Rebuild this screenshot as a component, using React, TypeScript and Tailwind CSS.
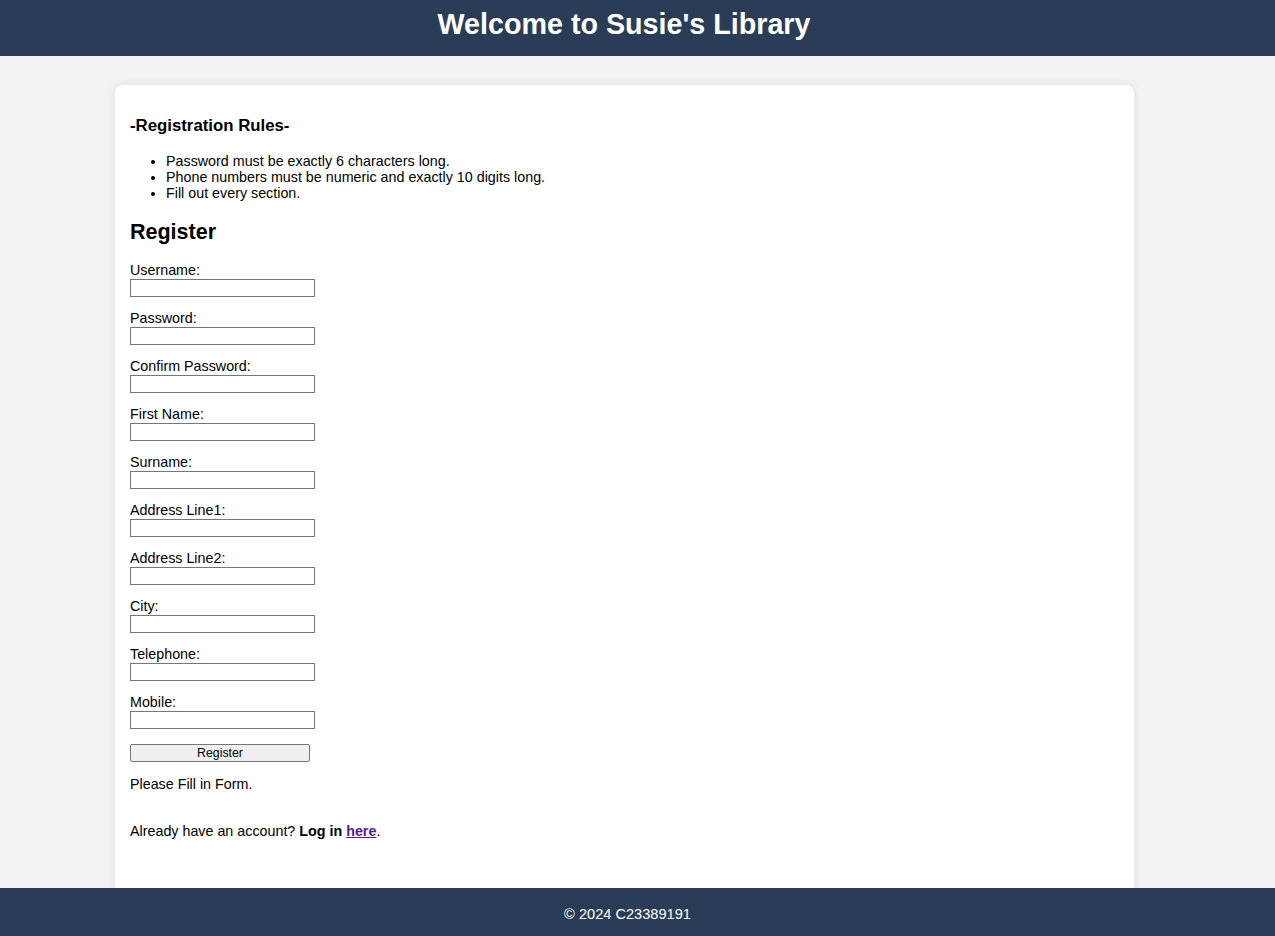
const fields = [
  "Username:",
  "Password:",
  "Confirm Password:",
  "First Name:",
  "Surname:",
  "Address Line1:",
  "Address Line2:",
  "City:",
  "Telephone:",
  "Mobile:",
];

const rules = [
  "Password must be exactly 6 characters long.",
  "Phone numbers must be numeric and exactly 10 digits long.",
  "Fill out every section.",
];

const App = () => {
  return (
    <div className="min-h-[936px] bg-[#f3f3f3] text-black font-['Liberation_Sans',Arial,sans-serif] text-[14.3px] leading-[16px]">
      {/* Header */}
      <header className="h-[56px] bg-[#2b3d56] flex justify-center pt-[7px] pr-[27px]">
        <h1 className="text-white text-[28.7px] leading-[34px] font-bold">
          Welcome to Susie's Library
        </h1>
      </header>

      {/* Card */}
      <main className="ml-[115px] mt-[29px] w-[1019px] bg-white rounded-[8px] shadow-[0_0_10px_rgba(0,0,0,0.1)] px-[15px] pt-[31px] pb-[80px]">
        <h3 className="text-[16.8px] leading-[19px] font-bold">-Registration Rules-</h3>
        <ul className="list-disc pl-[36px] mt-[18px]">
          {rules.map((rule, key) => (
            <li key={key}>{rule}</li>
          ))}
        </ul>
        <h2 className="text-[21.5px] leading-[26px] font-bold mt-[18px]">Register</h2>
        <form className="mt-[17px]" onSubmit={(e) => e.preventDefault()}>
          {fields.map((field, key) => (
            <div key={key} className="mb-[13px]">
              <label className="block">{field}</label>
              <input
                type="text"
                className="block w-[185px] h-[18px] mt-[1px] border border-[#767676] bg-white outline-none"
              />
            </div>
          ))}
          <button
            type="submit"
            className="w-[180px] h-[18px] mt-[2px] bg-[#efefef] border border-[#767676] rounded-[2px] text-[12.3px] leading-[14px]"
          >
            Register
          </button>
        </form>
        <p className="mt-[14px]">Please Fill in Form.</p>
        <p className="mt-[31px]">
          Already have an account? <b>Log in</b>{" "}
          <a href="#" className="text-[#551a8b] font-bold underline">
            here
          </a>
          .
        </p>
      </main>

      {/* Footer */}
      <footer className="fixed bottom-0 left-0 right-0 h-[48px] bg-[#2b3d56] flex items-center justify-center pt-[4px] pr-[20px] text-white text-[14.6px]">
        © 2024 C23389191
      </footer>
    </div>
  );
};

export default App;
